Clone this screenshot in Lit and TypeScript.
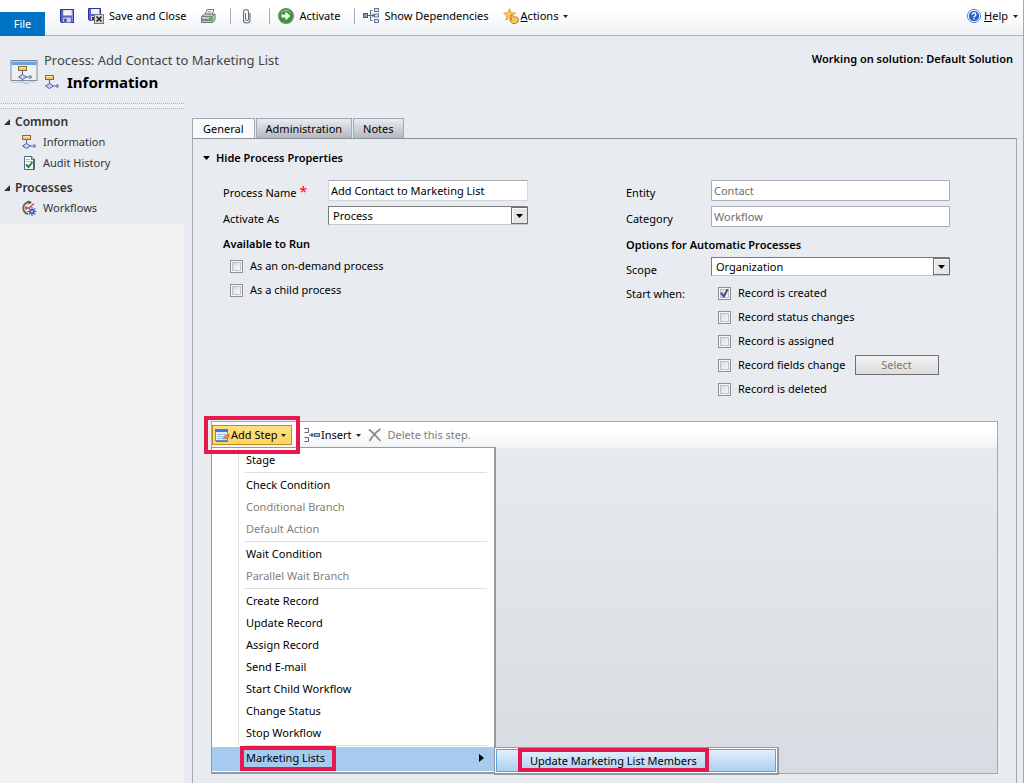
import { LitElement, html, css, svg, nothing } from "lit";
import { customElement, property, state } from "lit/decorators.js";
import { classMap } from "lit/directives/class-map.js";

const flowShape = svg`
  <rect x="1.5" y="1.5" width="8" height="4" fill="#fbc65a" stroke="#8a6a34"/>
  <path d="M2 2.5h7" stroke="#ffe6a8"/>
  <path d="M5.5 6v4" stroke="#4a5fb0"/>
  <path d="M5.5 9.5l4 2.5-4 2.5-4-2.5z" fill="#c9d3f2" stroke="#4a5fb0"/>
  <path d="M9.5 12h5M12.5 10l2 2-2 2" fill="none" stroke="#4a5fb0"/>`;

const floppy = svg`
  <path d="M1.5 1.5h12v12h-11l-1-1z" fill="#5a64cc" stroke="#2c3390"/>
  <rect x="4" y="2" width="8" height="5" fill="#eef2fc"/>
  <path d="M12.5 2v11" stroke="#8f98e8"/>
  <rect x="4" y="9" width="7" height="4.500" fill="#cdd3e6"/>
  <rect x="5" y="10" width="2" height="3" fill="#2c3390"/>`;

const icons: Record<string, { box: string; body: unknown }> = {
  save: { box: "1 1 13 13", body: floppy },
  saveClose: {
    box: "0 0 16 16",
    body: svg`<g transform="translate(-1 -1)">${floppy}</g>
      <rect x="6.500" y="6.500" width="9" height="9" fill="#d9d9d9" stroke="#777"/>
      <path d="M8.500 8.500l5 5M13.500 8.500l-5 5" stroke="#222" stroke-width="1.600"/>`,
  },
  print: {
    box: "0 0 16 16",
    body: svg`<path d="M5 6.500l2-5h7l-2 5z" fill="#fff" stroke="#5c7fa8"/>
      <path d="M7.500 3.500h4M7 5h4" stroke="#8fb4dc"/>
      <path d="M1.500 8.500l3-2.500h10.500v6l-3 2.500h-10.500z" fill="#c3c8cc" stroke="#6d757b"/>
      <path d="M1.500 8.500h10.500v6M12 8.500l3-2.500" fill="none" stroke="#7d858b"/>
      <path d="M2 12h9" stroke="#3f464c"/>
      <rect x="9" y="9.500" width="3.500" height="3" fill="#22d022"/>`,
  },
  clip: {
    box: "0 0 16 16",
    body: svg`<path d="M6.500 5v6a1.500 1.500 0 0 0 3 0V4a2.500 2.500 0 0 0-5 0v7.500a3 3 0 0 0 6.500.500V5" fill="none" stroke="#65707f" stroke-width="1.100"/>`,
  },
  activate: {
    box: "0 0 16 16",
    body: svg`<circle cx="8" cy="8" r="7.300" fill="#2f9a2a" stroke="#7b827b" stroke-width="1.400"/>
      <path d="M3 5.500a5.500 5.500 0 0 1 10 0" fill="none" stroke="#8ed284"/>
      <path d="M3.500 6.500h4v-3L12.500 8l-5 4.500v-3h-4z" fill="#fff"/>`,
  },
  depends: {
    box: "0 0 16 16",
    body: svg`<rect x=".5" y="5.500" width="4" height="4" fill="#7f9fd0" stroke="#4a5a78"/>
      <path d="M5 7.500h6M7.500 7.500v-5h2M7.500 7.500v5h2" fill="none" stroke="#5a6a86"/>
      <path d="M9 5.500l2 2-2 2" fill="none" stroke="#3b4a66"/>
      <g fill="#dce6f6" stroke="#5a6a86" stroke-width=".9"><rect x="11.500" y=".5" width="4" height="3"/><rect x="11.500" y="6" width="4" height="3"/><rect x="11.500" y="11.500" width="4" height="3"/></g>`,
  },
  actions: {
    box: "0 0 16 16",
    body: svg`<path d="M6.500.8l1.700 4 4.300.3-3.300 2.800 1.100 4.300-3.800-2.300-3.700 2.300 1-4.300L.6 5.100l4.200-.3z" fill="#fbcb57" stroke="#d99a3c" stroke-width=".9"/>
      <path d="M7.500 7.500l1.500-.5 2 2.500 2-1 2.500 2-.5 3.500-2.500 1.500h-3L6.500 12.500l.5-1 1.700.5z" fill="#f3c95f" stroke="#a27a2c" stroke-width=".9"/>`,
  },
  help: {
    box: "0 0 16 16",
    body: svg`<circle cx="8" cy="8" r="6.600" fill="#fff" stroke="#5a83c9"/>
      <circle cx="8" cy="8" r="5.200" fill="#2c64cf"/>
      <path d="M6.200 6.700a1.800 1.800 0 1 1 2.700 1.500c-.6.300-.9.600-.9 1.200M8 10.300v1.300" fill="none" stroke="#fff" stroke-width="1.400"/>`,
  },
  flow: { box: "0 0 16 16", body: flowShape },
  window: {
    box: "0 0 28 28",
    body: svg`<rect x="1" y="1.500" width="26" height="20" fill="#eef1f4" stroke="#7e8c9a"/>
      <rect x="1.500" y="2" width="25" height="4" fill="#6aa3dc"/>
      <path d="M2 2.500h24" stroke="#a9cdf0"/>
      <g transform="translate(7 6)">${flowShape}</g>
      <path d="M2 23.500h6l4-1.500 3 3 5-2h5M11 24l4-1 4 2" fill="none" stroke="#bcc4ce"/>`,
  },
  audit: {
    box: "0 0 16 16",
    body: svg`<path d="M3.500 1.500h7l3 3v10h-10z" fill="#f7fafc" stroke="#4b6a7c"/>
      <path d="M10.500 1.500v3h3M12.500 5v9" fill="none" stroke="#4b6a7c"/>
      <path d="M5 4.500h4M5 6.500h6" stroke="#9fb6c6"/>
      <path d="M5 9.500l2.500 2.500 4-5" fill="none" stroke="#1d8a2c" stroke-width="2"/>`,
  },
  workflows: {
    box: "0 0 16 16",
    body: svg`<path d="M9.500 2.200A6 6 0 1 0 7 14" fill="none" stroke="#666" stroke-width="2"/>
      <path d="M7 .5l4 2-3.500 2z" fill="#555"/>
      <path d="M4 8h4M8 8l5-4.500M4 8l2-1.500M4 8l2 1.500" stroke="#e2492c" stroke-width="1.400"/>
      <path d="M11 7v9M6.500 11.500h9M7.800 8.300l6.400 6.400M14.200 8.300l-6.400 6.400" stroke="#3b5fae" stroke-width="1.200"/>
      <circle cx="11" cy="11.500" r="2.600" fill="#3b5fae"/><circle cx="11" cy="11.500" r="1" fill="#dfe7f7"/>`,
  },
  step: {
    box: "0 0 16 16",
    body: svg`<rect x="1.500" y="2.500" width="12" height="11" fill="#e6eefb" stroke="#5c8fd8"/>
      <rect x="1" y="2" width="13" height="3" fill="#2f7fe6"/>
      <path d="M3 7.500h9M3 9.500h6M3 11.500h6" stroke="#9fbdea"/>
      <path d="M9 11.500l2-3 4-1v3l-3.500 1.500z" fill="#e8895a" stroke="#a0603a" stroke-width=".6"/>
      <path d="M2 14.500h12" stroke="#5a7ab0"/>`,
  },
  insert: {
    box: "0 0 16 16",
    body: svg`<path d="M.5 1.500h4v4h-4M.5 10.500h4v4h-4" fill="none" stroke="#5d6675"/>
      <path d="M5 8h5M8 6v4" stroke="#26334d"/>
      <rect x="10.500" y="6.500" width="5" height="3" fill="#9fc0ee" stroke="#3a64ad"/>`,
  },
  remove: {
    box: "0 0 16 16",
    body: svg`<path d="M2 2.500c4 3 7.500 7 11.500 11.500M13.500 2C9 5 5.500 9 2.500 14" fill="none" stroke="#8c8c8c" stroke-width="1.800"/>`,
  },
};

const icon = (name: string, size = 16) => html`<svg
  width=${size}
  height=${size}
  viewBox=${icons[name].box}
  aria-hidden="true"
>${icons[name].body}</svg>`;

const caret = html`<svg class="caret" width="5" height="3" viewBox="0 0 5 3" aria-hidden="true"><path d="M0 0h5L2.500 3z" fill="#222"/></svg>`;

const shared = css`
  :host { box-sizing: border-box; }
  *, *::before, *::after { box-sizing: border-box; }
  svg { flex: none; display: block; }
  button, input, select { font: inherit; color: inherit; margin: 0; }
  button { border: 0; padding: 0; background: none; text-align: left; white-space: nowrap; }
  a { color: inherit; text-decoration: none; }
`;

@customElement("command-bar")
class CommandBar extends LitElement {
  static styles = [shared, css`
    :host {
      display: flex; align-items: flex-end; height: 36px;
      border-bottom: 1px solid #adb2ba;
      background: linear-gradient(#fff 30%, #eff1f4);
    }
    .file { width: 45px; height: 24px; background: #0072c6; color: #fff; text-align: center; margin-bottom: -1px; }
    .tools { flex: 1; display: flex; align-items: center; gap: 14px; height: 16px; margin: 0 5px 11px 15px; }
    .tool { display: flex; align-items: center; gap: 5px; line-height: 16px; }
    .tight { gap: 2px; }
    .caret { margin-left: 3px; }
    .sep { width: 1px; height: 16px; background: #a9adb4; margin-right: -6px; }
    .help { margin-left: auto; }
  `];

  render() {
    return html`
      <button class="file">File</button>
      <div class="tools" role="toolbar">
        <button class="tool" aria-label="Save">${icon("save", 14)}</button>
        <button class="tool">${icon("saveClose")}<span>Save and Close</span></button>
        <button class="tool" aria-label="Print">${icon("print")}</button>
        <span class="sep"></span>
        <button class="tool" aria-label="Attach">${icon("clip")}</button>
        <span class="sep"></span>
        <button class="tool">${icon("activate")}<span>Activate</span></button>
        <span class="sep"></span>
        <button class="tool">${icon("depends")}<span>Show Dependencies</span></button>
        <button class="tool tight">${icon("actions")}<span><u>A</u>ctions</span>${caret}</button>
        <button class="tool tight help">${icon("help")}<span><u>H</u>elp</span>${caret}</button>
      </div>`;
  }
}

@customElement("side-nav")
class SideNav extends LitElement {
  static styles = [shared, css`
    :host { display: block; background: #f2f2f2; color: #333; }
    nav { background: #e8ecf1; padding-bottom: 6px; }
    .rule { height: 6px; border: dotted #a7abb2; border-width: 1px 0; background: #eff1f4; margin-left: 1px; }
    .group { padding-top: 4px; }
    .group + .group { padding-top: 6px; }
    h2 { display: flex; align-items: center; gap: 5px; margin: 0; padding-left: 4px; font-size: 12px; line-height: 18px; font-weight: 600; }
    a { display: flex; align-items: center; gap: 6px; padding-left: 21px; line-height: 21px; font-size: 11px; }
  `];

  groups = [
    { title: "Common", links: [["flow", "Information"], ["audit", "Audit History"]] },
    { title: "Processes", links: [["workflows", "Workflows"]] },
  ];

  render() {
    return html`<nav>
      <div class="rule"></div>
      ${this.groups.map((g) => html`<div class="group">
        <h2><svg width="6" height="6" viewBox="0 0 6 6" aria-hidden="true"><path d="M6 0v6H0z" fill="#333"/></svg>${g.title}</h2>
        ${g.links.map(([glyph, text]) => html`<a href="#">${icon(glyph)}${text}</a>`)}
      </div>`)}
    </nav>`;
  }
}

@customElement("process-form")
class ProcessForm extends LitElement {
  static styles = [shared, css`
    :host { display: block; }
    h3 { display: flex; align-items: center; gap: 6px; margin: 0; padding: 11px 0 0 10px; font-size: 11px; line-height: 16px; font-weight: 600; }
    .columns { display: grid; grid-template-columns: 403fr 390fr; padding: 12px 0 0 30px; }
    .row { display: grid; grid-template-columns: 105px 200px; min-height: 26px; align-items: start; padding-top: 2px; }
    .wide .row { grid-template-columns: 85px 239px; }
    .row > label, .row > .label { line-height: 16px; padding-top: 5px; }
    .req { color: #f00; font-size: 14px; line-height: 10px; }
    h4 { margin: 0; font-size: 11px; line-height: 16px; font-weight: 600; height: 24px; padding-top: 6px; }
    .wide h4 { height: 25px; padding-top: 7px; }
    .wide .row.starts { padding-top: 0; }
    .text { width: 100%; height: 21px; border: 1px solid #d4d8de; border-top-color: #abadb3; background: #fff; padding: 0 2px; }
    .text:disabled { border: 1px solid #a9adb3; border-radius: 1px; color: #6d6d6d; }
    .pick { position: relative; }
    .pick select { display: block; width: 100%; height: 19px; appearance: none; border: 1px solid #c9c9c9; border-top-color: #7b7b7b; border-left-color: #7b7b7b; border-radius: 0; background: #fff; padding: 0 20px 0 4px; }
    .pick svg { position: absolute; right: 0; top: 1px; pointer-events: none; }
    .check { display: flex; align-items: center; gap: 7px; height: 24px; }
    .check label { line-height: 16px; }
    .check button { width: 84px; height: 20px; margin-left: 2px; border: 1px solid #707070; background: linear-gradient(#f4f4f4, #dcdcdc); color: #777; text-align: center; }
    .left { padding-left: 7px; }
    .checks { padding-left: 7px; white-space: nowrap; }
    input[type="checkbox"] {
      appearance: none; flex: none; width: 13px; height: 13px; border: 1px solid #8e8f8f;
      box-shadow: inset 0 0 0 1px #f6f6f6, inset 0 0 0 2px #bcc1c7;
      background: linear-gradient(135deg, #ccd0d6, #f6f6f6 75%);
      display: grid; place-items: center;
    }
    input:checked::after { content: ""; width: 9px; height: 9px; background: #3a5299; clip-path: polygon(0 50%, 22% 42%, 40% 66%, 78% 0, 100% 0, 50% 100%, 35% 100%); }
  `];

  @state() starts = [
    { text: "Record is created", on: true },
    { text: "Record status changes", on: false },
    { text: "Record is assigned", on: false },
    { text: "Record fields change", on: false, pick: true },
    { text: "Record is deleted", on: false },
  ];

  private arrow = html`<svg width="17" height="17" viewBox="0 0 17 17" aria-hidden="true">
    <rect x=".5" y=".5" width="16" height="16" fill="#e6e6e6" stroke="#6e6e6e"/>
    <path d="M1.500 15.500v-14h14" fill="none" stroke="#fff"/>
    <path d="M5 7h7l-3.500 4z" fill="#000"/></svg>`;

  render() {
    return html`
      <h3><svg width="7" height="4" viewBox="0 0 7 4" aria-hidden="true"><path d="M0 0h7L3.500 4z" fill="#000"/></svg>Hide Process Properties</h3>
      <div class="columns">
        <div>
          <div class="row">
            <label for="name">Process Name <span class="req">*</span></label>
            <input class="text" id="name" type="text" .value=${"Add Contact to Marketing List"} />
          </div>
          <div class="row">
            <label for="as">Activate As</label>
            <div class="pick"><select id="as"><option>Process</option></select>${this.arrow}</div>
          </div>
          <h4>Available to Run</h4>
          <div class="left">
            <div class="check"><input type="checkbox" id="ondemand" /><label for="ondemand">As an on-demand process</label></div>
            <div class="check"><input type="checkbox" id="child" /><label for="child">As a child process</label></div>
          </div>
        </div>
        <div class="wide">
          <div class="row">
            <label for="entity">Entity</label>
            <input class="text" id="entity" type="text" disabled .value=${"Contact"} />
          </div>
          <div class="row">
            <label for="category">Category</label>
            <input class="text" id="category" type="text" disabled .value=${"Workflow"} />
          </div>
          <h4>Options for Automatic Processes</h4>
          <div class="row">
            <label for="scope">Scope</label>
            <div class="pick"><select id="scope"><option>Organization</option></select>${this.arrow}</div>
          </div>
          <div class="row starts">
            <span class="label" id="when">Start when:</span>
            <div class="checks" role="group" aria-labelledby="when">
              ${this.starts.map((s, i) => html`<div class="check">
                <input type="checkbox" id="start${i}" .checked=${s.on} /><label for="start${i}">${s.text}</label>
                ${s.pick ? html`<button disabled>Select</button>` : nothing}
              </div>`)}
            </div>
          </div>
        </div>
      </div>`;
  }
}

type Entry = { text: string; off?: boolean; sub?: string };

@customElement("step-editor")
class StepEditor extends LitElement {
  static styles = [shared, css`
    :host { display: block; border: 1px solid #a3a9b2; background: linear-gradient(#e8ecef, #d8dce2); }
    .bar { display: flex; align-items: center; height: 26px; background: linear-gradient(#fff 40%, #f0f2f5); }
    .tool { display: flex; align-items: center; line-height: 16px; height: 20px; gap: 1px; }
    .caret { margin-left: 3px; }
    .anchor { position: relative; }
    .add { width: 80px; padding-left: 1px; border: 1px solid #c48a1f; background: linear-gradient(#ffdf86, #ffd45e); }
    .insert { margin-left: 12px; }
    .delete { margin-left: 6px; gap: 5px; color: #808080; }
    .ring { position: absolute; border: 4px solid #e6194f; pointer-events: none; z-index: 3; }
    .add-ring { inset: -9px -8px -9px -8px; }
    .menu { position: absolute; top: 22px; left: -1px; z-index: 1; width: 285px; border: solid #9499a1; border-width: 1px 2px 2px 1px; background: linear-gradient(90deg, #fff 26px, #e0e2e5 26px, #e0e2e5 27px, #fff 27px); padding: 1px 0; }
    .item { position: relative; display: flex; align-items: center; justify-content: space-between; width: 100%; height: 22px; padding: 0 10px 0 34px; line-height: 16px; }
    .item:disabled { color: #808080; }
    .split { height: 3px; padding: 1px 7px 1px 33px; }
    .split i { display: block; height: 1px; background: #dcdee2; }
    .branch { position: relative; }
    .branch .item { height: 24px; padding-bottom: 2px; background: #a6cbee; }
    .mark { position: relative; }
    .mark .ring { inset: -5px -12px -3px -12px; }
    .branch > .item .mark .ring { inset: -4px -11px -5px -6px; }
    .submenu { position: absolute; left: 100%; top: 0; width: 285px; border: solid #9499a1; border-width: 1px 2px 2px 1px; background: #fff; padding: 1px; z-index: 2; }
    .submenu .item { height: 23px; padding: 1px 0 0 33px; border: 1px solid #5da2e0; background: linear-gradient(#e3effb, #acd0f1); }
  `];

  entries: Entry[][] = [
    [{ text: "Stage" }],
    [{ text: "Check Condition" }, { text: "Conditional Branch", off: true }, { text: "Default Action", off: true }],
    [{ text: "Wait Condition" }, { text: "Parallel Wait Branch", off: true }],
    ["Create Record", "Update Record", "Assign Record", "Send E-mail", "Start Child Workflow", "Change Status", "Stop Workflow"].map((text) => ({ text })),
    [{ text: "Marketing Lists", sub: "Update Marketing List Members" }],
  ];

  private entry(e: Entry) {
    if (!e.sub) return html`<button class="item" role="menuitem" ?disabled=${e.off}>${e.text}</button>`;
    return html`<div class="branch">
      <button class="item" role="menuitem" aria-haspopup="true" aria-expanded="true">
        <span class="mark">${e.text}<span class="ring"></span></span>
        <svg width="5" height="8" viewBox="0 0 5 8" aria-hidden="true"><path d="M0 0l5 4-5 4z" fill="#000"/></svg>
      </button>
      <div class="submenu" role="menu">
        <button class="item" role="menuitem"><span class="mark">${e.sub}<span class="ring"></span></span></button>
      </div>
    </div>`;
  }

  render() {
    return html`<div class="bar">
      <div class="anchor">
        <button class="tool add" aria-haspopup="true">${icon("step")}<span>Add Step</span>${caret}</button>
        <span class="ring add-ring"></span>
        <div class="menu" role="menu">
          ${this.entries.map((group, i) => html`
            ${i ? html`<div class="split" role="separator"><i></i></div>` : nothing}
            ${group.map((e) => this.entry(e))}`)}
        </div>
      </div>
      <button class="tool insert">${icon("insert")}<span>Insert</span>${caret}</button>
      <button class="tool delete" disabled>${icon("remove")}<span>Delete this step.</span></button>
    </div>`;
  }
}

@customElement("app-root")
class AppRoot extends LitElement {
  static styles = [shared, css`
    :host {
      display: flex; flex-direction: column; min-height: 100vh;
      border-right: 1px solid #a3a9b2; background: #e8ecf1; color: #000;
      font: 11px/16px "Noto Sans", "Open Sans", sans-serif;
    }
    .title { display: flex; justify-content: space-between; height: 67px; padding: 14px 10px 0; }
    .what { display: flex; gap: 6px; }
    .what > svg { margin-top: 9px; }
    .crumb { font-size: 13px; line-height: 21px; color: #444; }
    h1 { display: flex; align-items: center; gap: 7px; margin: 0; font-size: 15px; line-height: 22px; }
    .solution { font-weight: 600; line-height: 18px; }
    .body { flex: 1; display: grid; grid-template-columns: 184px 1fr; }
    main { display: flex; flex-direction: column; padding: 15px 6px 0 8px; }
    .tabs { display: flex; gap: 1px; margin-bottom: -1px; }
    .tab { height: 20px; margin-bottom: 1px; padding: 0 9px; border: 1px solid #a3a9b2; border-bottom: 0; background: linear-gradient(#e9ecf0, #b3b8c1); }
    .tab.on { height: 21px; margin-bottom: 0; padding: 0 10px; background: #f8fafc; }
    .panel { flex: 1; display: flex; flex-direction: column; border: 1px solid #a3a9b2; border-top-color: #8a8f99; border-bottom: 0; padding: 0 18px 9px; }
    process-form { margin: 0 -18px 20px; }
    step-editor { flex: 1; }
  `];

  @property() active = "General";

  render() {
    return html`
      <command-bar></command-bar>
      <header class="title">
        <div class="what">
          ${icon("window", 28)}
          <div>
            <div class="crumb">Process: Add Contact to Marketing List</div>
            <h1>${icon("flow")}Information</h1>
          </div>
        </div>
        <div class="solution">Working on solution: Default Solution</div>
      </header>
      <div class="body">
        <side-nav></side-nav>
        <main>
          <div class="tabs" role="tablist">
            ${["General", "Administration", "Notes"].map((t) => html`<button
              role="tab"
              class=${classMap({ tab: true, on: t === this.active })}
              @click=${() => (this.active = t)}
            >${t}</button>`)}
          </div>
          <section class="panel">
            <process-form></process-form>
            <step-editor></step-editor>
          </section>
        </main>
      </div>`;
  }
}
